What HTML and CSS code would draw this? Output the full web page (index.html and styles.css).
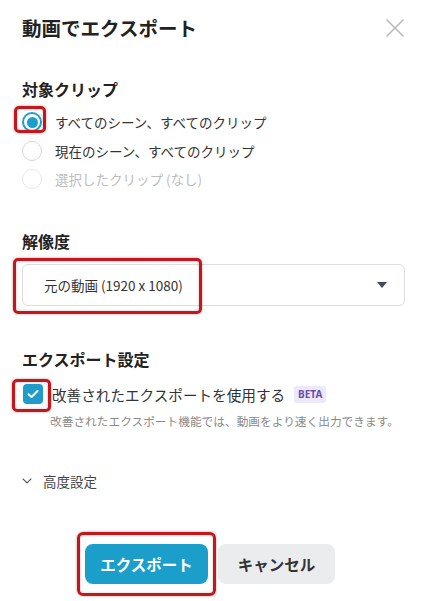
FILE: index.html
```html
<!DOCTYPE html>
<html lang="ja">
<head>
<meta charset="utf-8">
<title>動画でエクスポート</title>
<link rel="stylesheet" href="styles.css">
</head>
<body>
<div class="dialog">
  <header class="head">
    <h1 class="title">動画でエクスポート</h1>
    <button class="close" aria-label="閉じる">
      <svg width="20" height="20" viewBox="0 0 20 20"><path d="M1.5 1.5 L18.5 18.5 M18.5 1.5 L1.5 18.5" stroke="#b9b9b9" stroke-width="1.6" fill="none"/></svg>
    </button>
  </header>

  <section class="sec sec-clip">
    <h2 class="label">対象クリップ</h2>
    <div class="radios">
      <div class="radio-row"><span class="radio checked hl hl-radio"></span><span class="rtext">すべてのシーン、すべてのクリップ</span></div>
      <div class="radio-row"><span class="radio"></span><span class="rtext">現在のシーン、すべてのクリップ</span></div>
      <div class="radio-row disabled"><span class="radio"></span><span class="rtext">選択したクリップ (なし)</span></div>
    </div>
  </section>

  <section class="sec sec-res">
    <h2 class="label">解像度</h2>
    <div class="select hl hl-select">
      <span class="select-text">元の動画 (1920 x 1080)</span>
      <svg class="caret" width="10" height="6" viewBox="0 0 10 6"><path d="M0 0 H10 L5 6 Z" fill="#41475f"/></svg>
    </div>
  </section>

  <section class="sec sec-exp">
    <h2 class="label">エクスポート設定</h2>
    <div class="check-row">
      <span class="checkbox hl hl-check">
        <svg width="12" height="10" viewBox="0 0 12 10"><path d="M1.5 5.2 L4.6 8 L10.5 2" stroke="#fff" stroke-width="2" fill="none" stroke-linecap="round" stroke-linejoin="round"/></svg>
      </span>
      <span class="ctext">改善されたエクスポートを使用する</span>
      <span class="badge">BETA</span>
    </div>
    <p class="desc">改善されたエクスポート機能では、動画をより速く出力できます。</p>
  </section>

  <div class="adv">
    <svg class="chev" width="10" height="6" viewBox="0 0 10 6"><path d="M0.7 0.7 L5 5 L9.3 0.7" stroke="#555" stroke-width="1.1" fill="none"/></svg>
    <span>高度設定</span>
  </div>

  <div class="actions">
    <button class="btn btn-primary hl hl-btn">エクスポート</button>
    <button class="btn btn-cancel">キャンセル</button>
  </div>
</div>
</body>
</html>
```

FILE: styles.css
```css
* { box-sizing: border-box; }
html, body { margin: 0; padding: 0; background: #fff; }
body {
  font-family: "Noto Sans CJK JP", "Noto Sans", sans-serif;
  color: #333;
}
.dialog {
  width: 426px;
  height: 601px;
  padding: 14px 21px 0 22px;
  overflow: hidden;
}
.head {
  display: flex;
  justify-content: space-between;
  align-items: center;
  height: 28px;
}
.title {
  margin: 0;
  font-size: 19.5px;
  line-height: 28px;
  font-weight: 700;
  color: #222;
}
.close {
  border: 0;
  background: none;
  padding: 0;
  width: 20px;
  height: 20px;
  display: flex;
}
.label {
  margin: 0;
  font-size: 16px;
  line-height: 24px;
  font-weight: 700;
  color: #222;
}
.sec-clip { margin-top: 35px; }
.radios { margin-top: 7px; display: flex; flex-direction: column; }
.radio-row {
  height: 28.5px;
  display: flex;
  align-items: center;
  gap: 13px;
  font-size: 13.5px;
  color: #333;
}
.radio {
  width: 20px;
  height: 20px;
  border-radius: 50%;
  border: 1px solid #d8d8d8;
  background: #fff;
  flex: none;
}
.radio.checked {
  border: 2px solid #1f9fca;
  display: flex;
  align-items: center;
  justify-content: center;
}
.radio.checked::before {
  content: "";
  width: 11px;
  height: 11px;
  border-radius: 50%;
  background: #1a9fca;
}
.radio-row.disabled { color: #bdbdbd; }
.radio-row.disabled .radio { border-color: #e8e8e8; }

.sec-res { margin-top: 35.5px; }
.select {
  margin-top: 11px;
  height: 42px;
  border: 1px solid #dedede;
  border-radius: 6px;
  display: flex;
  align-items: center;
  justify-content: space-between;
  padding: 0 17px 0 21px;
}
.select-text { font-size: 13.5px; color: #333; }

.sec-exp { margin-top: 41px; }
.check-row {
  margin-top: 11px;
  height: 24px;
  display: flex;
  align-items: center;
}
.checkbox {
  width: 20px;
  height: 20px;
  margin-left: 1px;
  border-radius: 4px;
  background: #1f9cca;
  display: flex;
  align-items: center;
  justify-content: center;
  flex: none;
}
.ctext {
  margin-left: 9px;
  font-size: 14.6px;
  color: #333;
}
.badge {
  margin-left: 9px;
  background: #eee8fb;
  color: #6a4fa9;
  font-family: "Noto Sans", sans-serif;
  font-weight: 700;
  font-size: 10px;
  line-height: 17px;
  padding: 0 4px;
  border-radius: 3px;
}
.desc {
  margin: 6px 0 0 28px;
  font-size: 11.7px;
  line-height: 18px;
  color: #8a8a8a;
  white-space: nowrap;
}

.adv {
  margin-top: 41px;
  height: 20px;
  display: flex;
  align-items: center;
  font-size: 13.5px;
  color: #444;
}
.chev { margin-right: 11px; }

.actions {
  margin-top: 53px;
  display: flex;
  gap: 10px;
  padding-left: 63px;
}
.btn {
  height: 40px;
  border: 0;
  border-radius: 8px;
  font-family: "Noto Sans CJK JP", "Noto Sans", sans-serif;
  font-size: 15.5px;
  font-weight: 700;
  padding: 0;
}
.btn-primary { width: 123px; background: #1b9fca; color: #fff; }
.btn-cancel { width: 117px; background: #ebecee; color: #333; }

/* annotation highlights */
.hl { position: relative; }
.hl::after {
  content: "";
  position: absolute;
  border: 3px solid #c4161c;
  border-radius: 5px;
  box-shadow: 0 0 3px rgba(0,0,0,0.35), inset 0 0 3px rgba(0,0,0,0.25);
  pointer-events: none;
}
.hl-radio::after { left: -10px; top: -8px; right: -6px; bottom: -3px; }
.hl-check::after { left: -11px; top: -5px; right: -8px; bottom: -8px; }
.hl-select::after { left: -10px; top: -7px; bottom: -9px; width: 183px; }
.hl-btn::after { left: -8px; right: -8px; top: -12px; bottom: -12px; border-radius: 6px; }
```
